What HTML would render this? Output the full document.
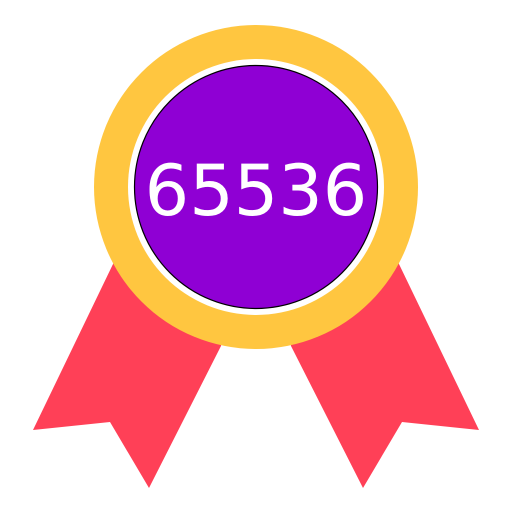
<!DOCTYPE html>
<html><head><style>html,body{margin:0;padding:0;background:#fff;width:512px;height:512px;overflow:hidden}</style></head>
<body>
<svg width="512" height="512" viewBox="0 0 512 512" xmlns="http://www.w3.org/2000/svg">
<polygon points="114,262 230,300 221,346 149,488 110,422 33,430" fill="#ff4057"/>
<polygon points="398,262 282,300 291,346 363,488 402,422 479,430" fill="#ff4057"/>
<circle cx="256" cy="187" r="162" fill="#ffc640"/>
<circle cx="256" cy="187" r="128" fill="#fff"/>
<circle cx="256" cy="187" r="121.5" fill="#8f00d4" stroke="#000" stroke-width="1.2"/>
<text x="256" y="215" text-anchor="middle" font-family="DejaVu Sans, sans-serif" font-size="70" fill="#fff">65536</text>
</svg>
</body></html>
